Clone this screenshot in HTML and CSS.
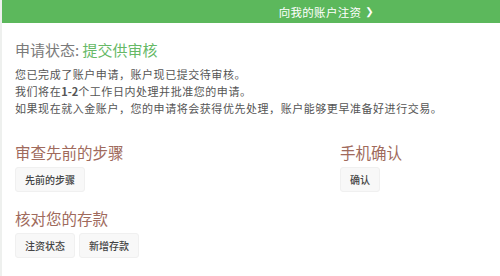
FILE: index.html
```html
<!DOCTYPE html>
<html lang="zh-CN">
<head>
  <meta charset="UTF-8">
  <title>账户申请状态</title>
  <meta name="viewport" content="width=device-width, initial-scale=1.0">
  <link rel="stylesheet" href="styles.css">
</head>
<body>
  <div class="page">
    <div class="fund-bar">
      <a class="fund-link" href="#">向我的账户注资 <span class="chev">❯</span></a>
    </div>

    <div class="content">
      <h1 class="status-title">申请状态: <span class="status-value">提交供审核</span></h1>
      <p class="status-text">
        您已完成了账户申请，账户现已提交待审核。<br>
        我们将在<b>1-2</b>个工作日内处理并批准您的申请。<br>
        如果现在就入金账户，您的申请将会获得优先处理，账户能够更早准备好进行交易。
      </p>

      <div class="sections">
        <div class="section">
          <h2 class="section-title">审查先前的步骤</h2>
          <div class="btn-row">
            <button class="btn">先前的步骤</button>
          </div>
        </div>
        <div class="section">
          <h2 class="section-title">手机确认</h2>
          <div class="btn-row">
            <button class="btn">确认</button>
          </div>
        </div>
        <div class="section">
          <h2 class="section-title">核对您的存款</h2>
          <div class="btn-row">
            <button class="btn">注资状态</button>
            <button class="btn">新增存款</button>
          </div>
        </div>
      </div>
    </div>
  </div>
</body>
</html>
```

FILE: styles.css
```css
html, body {
  margin: 0; padding: 0;
  width: 500px; height: 276px;
  background: #fff;
  font-family: 'Noto Sans CJK SC', 'Noto Sans', sans-serif;
  overflow: hidden;
}
.page {
  height: 276px;
  border-left: 2px solid #eef0ee;
  box-sizing: border-box;
}
.fund-bar {
  height: 23px;
  background: #5cb85c;
  display: flex;
  align-items: center;
  justify-content: flex-end;
  padding-right: 126px;
}
.fund-link {
  color: #fff;
  text-decoration: none;
  font-size: 11.5px;
  letter-spacing: 0.3px;
  display: inline-flex;
  align-items: center;
  gap: 4px;
}
.fund-link .chev {
  font-size: 10px;
  font-weight: 700;
  font-family: 'DejaVu Sans', sans-serif;
}
.content {
  padding: 0 13px;
}
.status-title {
  margin: 16px 0 0 0;
  font-size: 15px;
  font-weight: 400;
  color: #7a7a7a;
  line-height: 22px;
}
.status-value {
  color: #66b966;
}
.status-text {
  margin: 5px 0 0 0;
  font-size: 11px;
  letter-spacing: 0.55px;
  line-height: 17px;
  color: #555;
}
.status-text b {
  font-weight: 700;
  letter-spacing: 0;
}
.sections {
  display: grid;
  grid-template-columns: 325px 1fr;
  row-gap: 16px;
  margin-top: 25px;
}
.section-title {
  margin: 0;
  font-size: 15.5px;
  font-weight: 400;
  color: #a06a5c;
  line-height: 20px;
}
.btn-row {
  display: flex;
  gap: 4px;
  margin-top: 5px;
}
.btn {
  background: #f8f8f8;
  border: 1px solid #f0f0f0;
  border-radius: 3px;
  color: #444;
  font-family: inherit;
  font-size: 10px;
  font-weight: 500;
  padding: 0 9px;
  height: 25px;
  cursor: pointer;
}
```
